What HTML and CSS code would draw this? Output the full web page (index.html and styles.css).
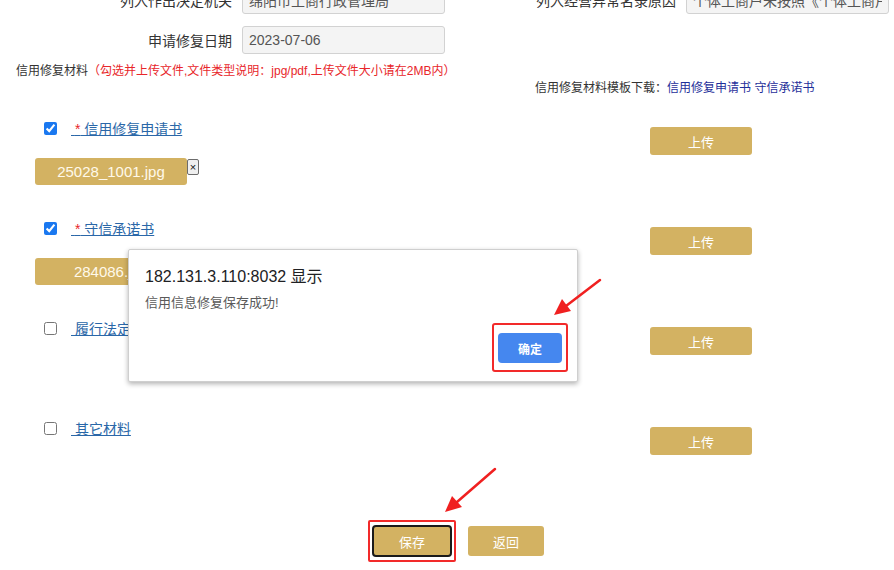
FILE: index.html
```html
<!DOCTYPE html>
<html lang="zh-CN">
<head>
<meta charset="utf-8">
<title>信用修复</title>
<link rel="stylesheet" href="styles.css">
</head>
<body>
<div class="page">
  <div class="form-grid">
    <label class="lbl">列入作出决定机关</label>
    <input class="field" readonly value="绵阳市工商行政管理局">
    <label class="lbl">列入经营异常名录原因</label>
    <input class="field" readonly value="个体工商户未按照《个体工商户年度报告暂行办法》规定报送年度报告">
    <label class="lbl">申请修复日期</label>
    <input class="field" readonly value="2023-07-06">
  </div>

  <p class="note">信用修复材料<span class="red">（勾选并上传文件,文件类型说明：jpg/pdf,上传文件大小请在2MB内）</span></p>
  <p class="tpl">信用修复材料模板下载：<a class="tpl-link">信用修复申请书</a> <a class="tpl-link">守信承诺书</a></p>

  <div class="items">
    <div class="item">
      <div class="item-left">
        <div class="check-row">
          <input type="checkbox" class="chk" checked>
          <a class="mat-link">&nbsp;<span class="red">*</span> 信用修复申请书</a>
        </div>
        <div class="chip-row">
          <span class="chip">25028_1001.jpg</span><span class="chip-x">×</span>
        </div>
      </div>
      <button class="btn-up">上传</button>
    </div>
    <div class="item">
      <div class="item-left">
        <div class="check-row">
          <input type="checkbox" class="chk" checked>
          <a class="mat-link">&nbsp;<span class="red">*</span> 守信承诺书</a>
        </div>
        <div class="chip-row">
          <span class="chip">284086.jpg</span><span class="chip-x">×</span>
        </div>
      </div>
      <button class="btn-up">上传</button>
    </div>
    <div class="item">
      <div class="item-left">
        <div class="check-row">
          <input type="checkbox" class="chk">
          <a class="mat-link">&nbsp;履行法定义务证明材料</a>
        </div>
      </div>
      <button class="btn-up">上传</button>
    </div>
    <div class="item">
      <div class="item-left">
        <div class="check-row">
          <input type="checkbox" class="chk">
          <a class="mat-link">&nbsp;其它材料</a>
        </div>
      </div>
      <button class="btn-up">上传</button>
    </div>
  </div>

  <div class="actions">
    <span class="mark"><button class="btn-act btn-save">保存</button></span>
    <button class="btn-act">返回</button>
  </div>
</div>

<div class="dialog">
  <div class="dlg-title">182.131.3.110:8032 显示</div>
  <div class="dlg-msg">信用信息修复保存成功!</div>
  <div class="dlg-foot">
    <span class="mark mark-ok"><button class="btn-ok">确定</button></span>
  </div>
</div>

<svg class="arrows" width="894" height="570" viewBox="0 0 894 570">
  <line x1="600" y1="280" x2="566" y2="306" stroke="#f02020" stroke-width="2.5" stroke-linecap="round"/>
  <polygon points="554,315 562,299 571,311" fill="#f02020"/>
  <line x1="495" y1="469" x2="457" y2="502" stroke="#f02020" stroke-width="2.5" stroke-linecap="round"/>
  <polygon points="445,512 452,496 462,507" fill="#f02020"/>
</svg>
</body>
</html>
```

FILE: styles.css
```css
* { box-sizing: border-box; }
html, body { margin: 0; padding: 0; background: #fff; }
body {
  font-family: "Liberation Sans", "Noto Sans CJK SC", sans-serif;
  color: #333;
  width: 894px;
  height: 570px;
  overflow: hidden;
  position: relative;
}
.page { margin-top: -14px; }

.form-grid {
  display: grid;
  grid-template-columns: 242px 203px 241px 203px;
  row-gap: 12px;
  align-items: center;
}
.lbl {
  text-align: right;
  padding-right: 10px;
  font-size: 14px;
  color: #333;
  white-space: nowrap;
}
.field {
  height: 28px;
  width: 203px;
  border: 1px solid #d2d2d2;
  border-radius: 3px;
  background: #f4f4f4;
  padding: 0 6px;
  font-family: "Liberation Sans", "Noto Sans CJK SC", sans-serif;
  font-size: 14px;
  color: #555;
  outline: none;
}

.note {
  margin: 9px 0 0 16px;
  font-size: 12px;
  line-height: 16px;
  color: #333;
}
.red { color: #e8262a; }
.tpl {
  margin: 1px 0 0 535px;
  font-size: 12px;
  line-height: 16px;
  color: #333;
}
.tpl-link { color: #1f2f9a; text-decoration: none; }

.items { margin-top: 19px; }
.item {
  height: 100px;
  display: flex;
  align-items: flex-start;
}
.item-left { width: 650px; }
.check-row {
  display: flex;
  align-items: center;
  height: 18px;
  margin-top: 4px;
  padding-left: 41px;
}
.chk {
  width: 13px;
  height: 13px;
  margin: 0 14px 0 3px;
  accent-color: #1a78f0;
}
.mat-link {
  font-size: 14px;
  color: #2a67a8;
  text-decoration: underline;
  white-space: nowrap;
}
.chip-row {
  margin-top: 21px;
  padding-left: 35px;
  display: flex;
  align-items: flex-start;
}
.chip {
  display: inline-flex;
  align-items: center;
  justify-content: center;
  width: 152px;
  height: 27px;
  background: #d3b262;
  border-radius: 3px;
  color: #fff9ea;
  font-size: 15px;
}
.chip-x {
  display: inline-flex;
  align-items: center;
  justify-content: center;
  width: 12px;
  height: 16px;
  margin-top: 1px;
  border: 1px solid #6c6c6c;
  border-radius: 2px;
  background: #efefef;
  color: #111;
  font-size: 11px;
  line-height: 1;
}
.btn-up {
  margin-top: 12px;
  width: 102px;
  height: 28px;
  border: none;
  border-radius: 3px;
  background: #d3b262;
  color: #fff;
  font-family: "Liberation Sans", "Noto Sans CJK SC", sans-serif;
  font-size: 13px;
}

.actions {
  display: flex;
  align-items: center;
  gap: 12px;
  padding-left: 368px;
  margin-top: 5px;
}
.mark {
  display: inline-flex;
  border: 2px solid #f22a2a;
  border-radius: 2px;
  padding: 3px 2px;
}
.btn-act {
  width: 76px;
  height: 30px;
  border: none;
  border-radius: 3px;
  background: #d3b262;
  color: #fff;
  font-family: "Liberation Sans", "Noto Sans CJK SC", sans-serif;
  font-size: 13px;
}
.btn-save {
  width: 80px;
  height: 32px;
  border: 2px solid #1a1a1a;
  border-radius: 4px;
}

.dialog {
  position: absolute;
  left: 128px;
  top: 249px;
  width: 450px;
  height: 133px;
  background: #fff;
  border: 1px solid #cfcfcf;
  border-radius: 2px;
  box-shadow: 0 2px 5px rgba(0, 0, 0, 0.3);
  padding: 17px 16px 0 16px;
}
.dlg-title {
  font-size: 16px;
  line-height: 20px;
  color: #202124;
}
.dlg-msg {
  margin-top: 8px;
  font-size: 13px;
  line-height: 16px;
  color: #5a5a5a;
}
.dlg-foot {
  display: flex;
  justify-content: flex-end;
  margin-top: 12px;
}
.mark-ok {
  padding: 8px 4px 7px 4px;
  margin-right: -7px;
  border-radius: 3px;
}
.btn-ok {
  width: 64px;
  height: 30px;
  border: none;
  border-radius: 4px;
  background: #4587ef;
  color: #fff;
  font-family: "Liberation Sans", "Noto Sans CJK SC", sans-serif;
  font-size: 12px;
  font-weight: bold;
}

.arrows {
  position: absolute;
  left: 0;
  top: 0;
  pointer-events: none;
}
```
